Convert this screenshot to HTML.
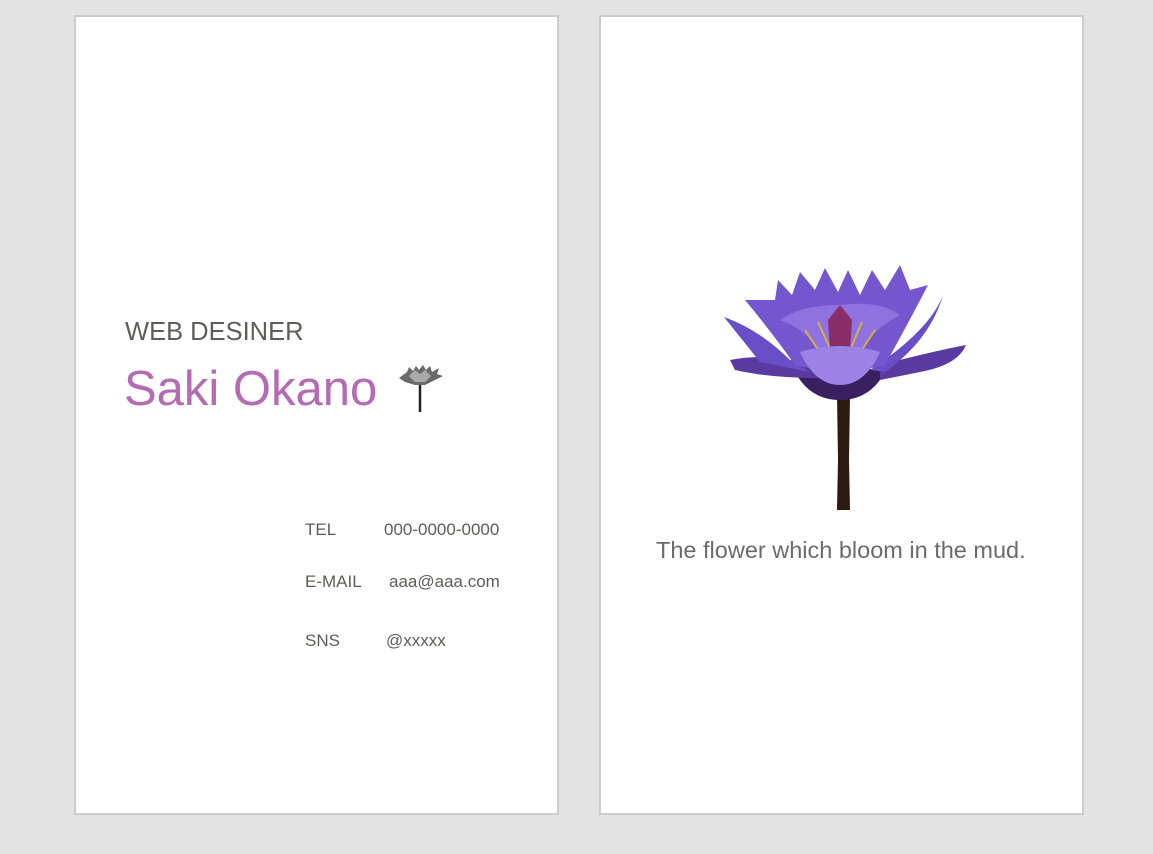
<!DOCTYPE html>
<html><head><meta charset="utf-8"><style>
html,body{margin:0;padding:0}
body{width:1153px;height:854px;background:#e3e3e3;position:relative;overflow:hidden;font-family:"Liberation Sans",sans-serif;color:#615b5b}
.card{position:absolute;top:15px;width:481px;height:796px;background:#fff;border:2px solid #cccccc}
.t{position:absolute;white-space:nowrap;line-height:1}
</style></head><body>
<div class="card" style="left:74px"></div>
<div class="card" style="left:599px"></div>

<div class="t" style="left:125px;top:320px;font-size:25.5px;color:#615b5b">WEB DESINER</div>
<div class="t" style="left:124px;top:365px;font-size:49px;color:#b56ab4">Saki Okano</div>
<svg style="position:absolute;left:395px;top:364px" width="50" height="50" viewBox="0 0 50 50">
<line x1="25" y1="18" x2="25" y2="48" stroke="#222" stroke-width="2.5"/>
<path d="M4 14 L12 8 L14 3 L18 7 L21 2 L24 6 L28 1 L31 6 L35 2 L37 8 L44 4 L42 10 L48 12 L38 17 L30 21 L20 21 L10 18 Z" fill="#6a6a6a"/>
<path d="M14 12 L20 6 L25 10 L30 6 L36 12 L30 18 L20 18 Z" fill="#aaa"/>
</svg>

<div class="t" style="left:305px;top:521px;font-size:17px">TEL</div>
<div class="t" style="left:384px;top:521px;font-size:17px">000-0000-0000</div>
<div class="t" style="left:305px;top:573px;font-size:17px">E-MAIL</div>
<div class="t" style="left:389px;top:573px;font-size:17px">aaa@aaa.com</div>
<div class="t" style="left:305px;top:632px;font-size:17px">SNS</div>
<div class="t" style="left:386px;top:632px;font-size:17px">@xxxxx</div>

<svg style="position:absolute;left:700px;top:260px" width="280" height="260" viewBox="0 0 280 260">
<path d="M137 135 L150 135 L149 200 L150 250 L137 250 L138 200 Z" fill="#2a1a10"/>
<path d="M95 112 Q140 100 185 112 Q170 140 140 140 Q110 140 95 112 Z" fill="#3a2060"/>
<path d="M30 100 Q70 92 110 105 L120 118 Q70 118 35 110 Z" fill="#5a3aa0"/>
<path d="M180 105 Q230 92 266 85 Q258 105 220 112 L180 120 Z" fill="#5a3aa0"/>
<path d="M24 57 Q60 70 90 100 L110 112 L60 102 Z" fill="#6a4ec8"/>
<path d="M243 35 Q230 80 185 112 L170 110 Q230 70 243 35 Z" fill="#6a4ec8"/>
<path d="M45 40 Q70 70 95 105 L140 115 L185 105 Q210 60 228 25 L210 30 L200 5 L185 30 L172 10 L160 35 L148 10 L138 32 L125 8 L115 30 L100 12 L92 35 L78 20 L75 40 Z" fill="#7456cf"/>
<path d="M80 60 Q110 70 130 105 L150 105 Q170 70 200 55 Q180 40 140 45 Q100 45 80 60 Z" fill="#8f72e0"/>
<path d="M128 60 L140 45 L152 60 L150 90 L130 90 Z" fill="#8a2e6a"/>
<path d="M105 70 L125 100 M175 70 L155 100 M118 62 L133 95 M162 62 L148 95" stroke="#d6b040" stroke-width="2" fill="none"/>
<path d="M100 92 Q140 80 180 92 Q165 125 140 125 Q115 125 100 92 Z" fill="#9d82e6"/>
</svg>

<div class="t" style="left:656px;top:539px;font-size:23.5px;color:#6b6b6b">The flower which bloom in the mud.</div>
</body></html>
